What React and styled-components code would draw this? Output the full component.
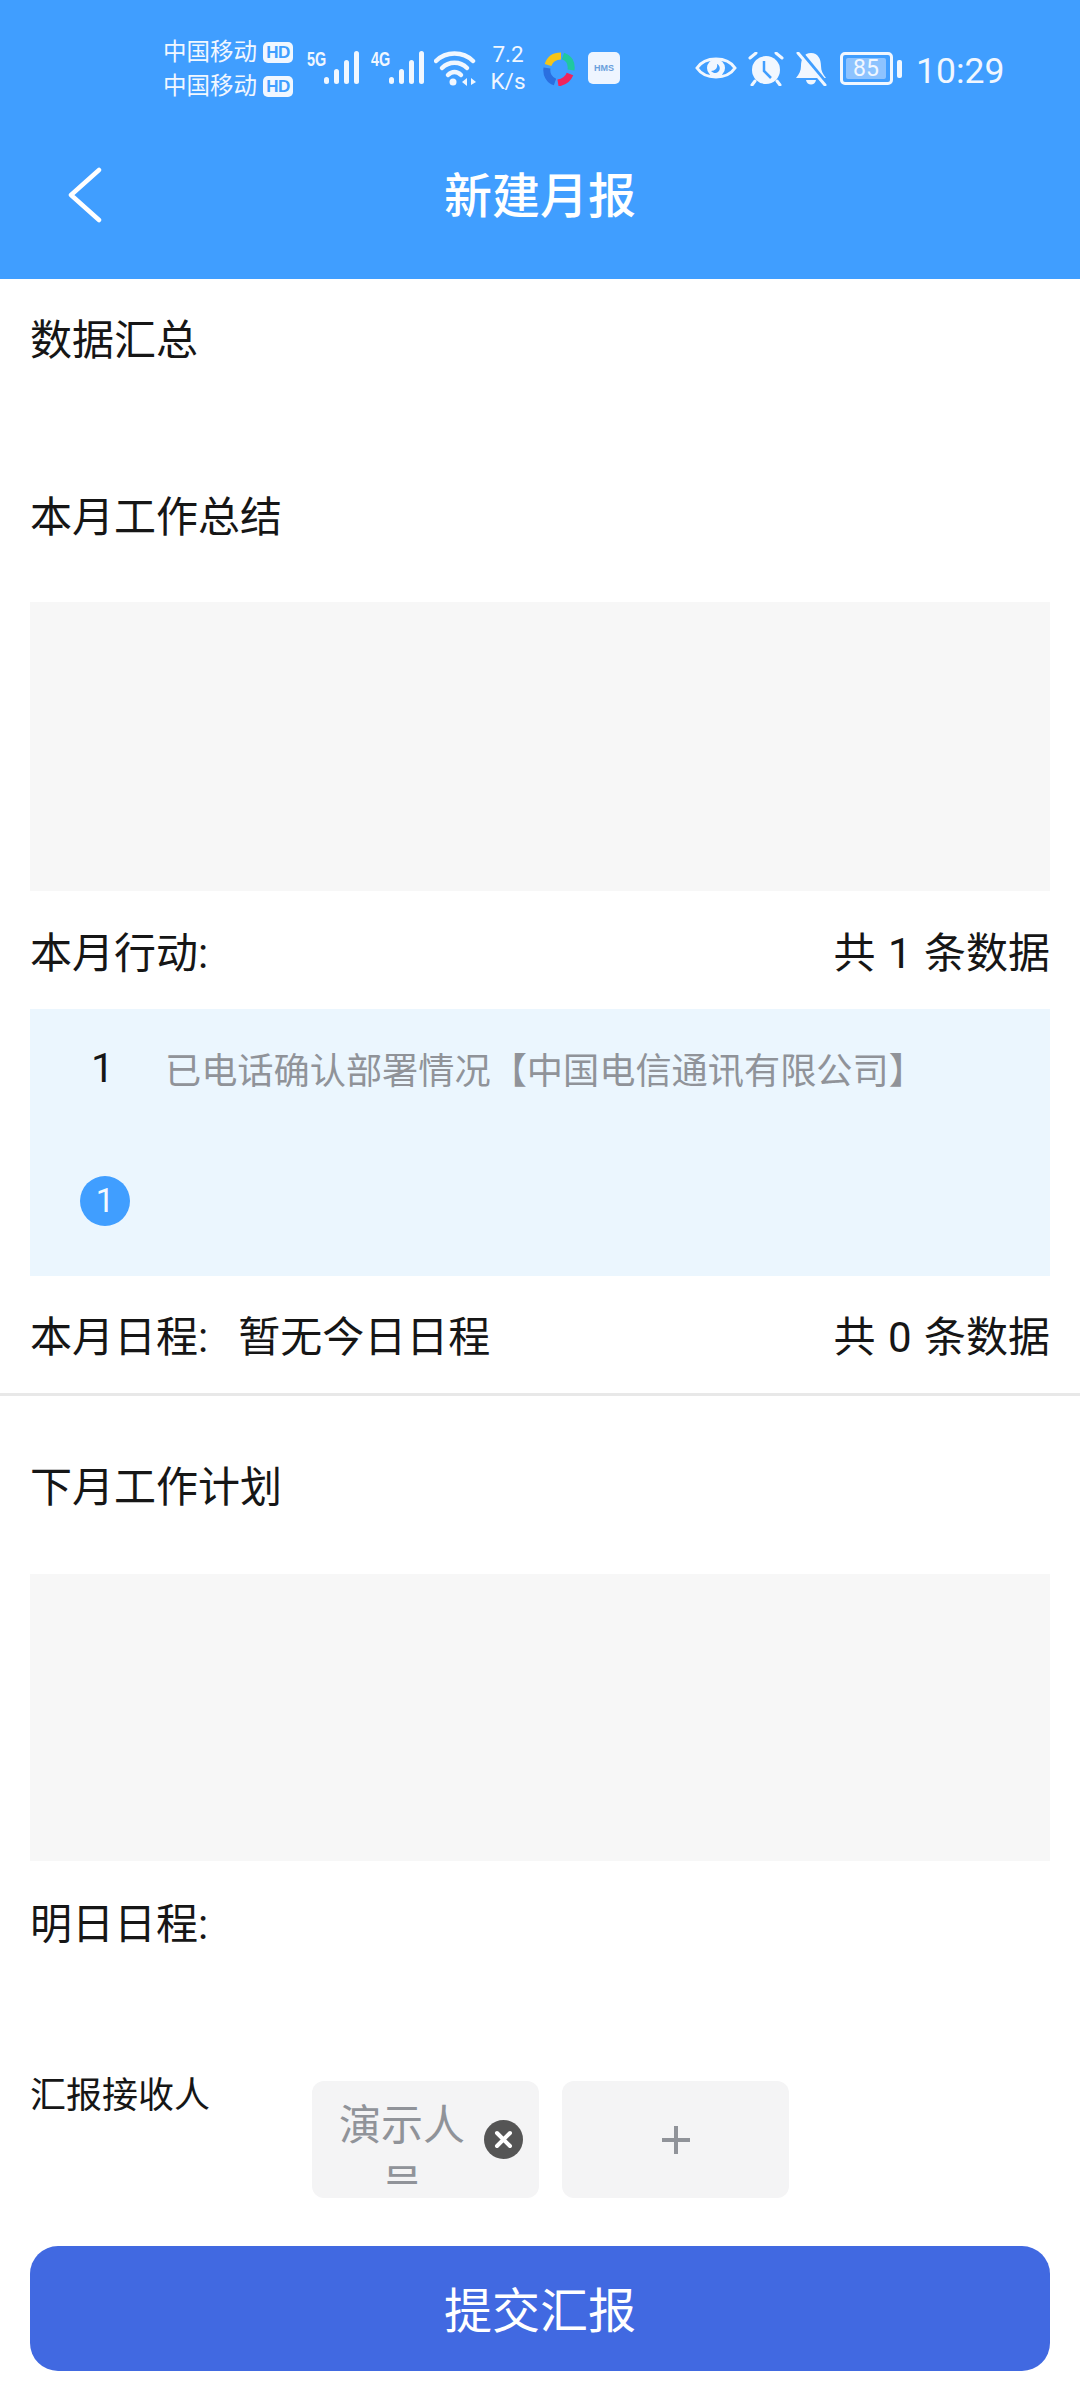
import styled, { createGlobalStyle } from 'styled-components';

const GlobalStyle = createGlobalStyle`
  html, body {
    margin: 0;
    padding: 0;
    background: #fff;
    font-family: Roboto, "Noto Sans CJK SC", sans-serif;
  }
`;

const Page = styled.div`
  width: 1080px;
  height: 2400px;
  overflow: hidden;
  background: #fff;
  color: #161616;
  display: flex;
  flex-direction: column;
`;

const Header = styled.header`
  background: #409eff;
  height: 279px;
  color: #fff;
  flex-shrink: 0;
`;

const StatusBar = styled.div`
  height: 100px;
  padding: 38px 0 0 163px;
  box-sizing: border-box;
  display: flex;
  align-items: flex-start;
  color: #f1f7ff;
`;

const Carriers = styled.div`
  display: flex;
  flex-direction: column;
  gap: 6px;
  width: 144px;
  flex-shrink: 0;
`;

const Carrier = styled.div`
  display: flex;
  align-items: center;
  gap: 6px;
  font-size: 23.5px;
  line-height: 28px;
  white-space: nowrap;
`;

const HdTag = styled.span`
  width: 30px;
  height: 21px;
  border-radius: 5px;
  background: #f1f7ff;
  color: #409eff;
  font: 700 17px/21px "Liberation Sans", sans-serif;
  text-align: center;
  letter-spacing: -0.5px;
`;

const SignalWrap = styled.div`
  position: relative;
  width: ${(p) => p.$w}px;
  height: 50px;
  margin-top: 12px;
  flex-shrink: 0;
`;

const NetLabel = styled.span`
  position: absolute;
  left: 0;
  top: 0;
  font: 700 20px/18px "Liberation Sans", sans-serif;
  transform: scaleX(0.72);
  transform-origin: left;
`;

const Bars = styled.svg`
  position: absolute;
  left: ${(p) => p.$x}px;
  top: 1px;
`;

const Speed = styled.div`
  width: 44px;
  margin-left: 10px;
  margin-top: 3px;
  text-align: center;
  font-size: 22.5px;
  line-height: 27px;
  flex-shrink: 0;
`;

const AppIcon = styled.svg`
  margin: 14px 13px 0 13px;
  flex-shrink: 0;
`;

const HmsIcon = styled.div`
  width: 32px;
  height: 32px;
  margin-top: 14px;
  border-radius: 5px;
  background: #eef5ff;
  color: #6a9fdc;
  font: 700 9px/32px "Liberation Sans", sans-serif;
  text-align: center;
  flex-shrink: 0;
`;

const StatusIcon = styled.svg`
  flex-shrink: 0;
  margin-top: ${(p) => p.$top}px;
  margin-left: ${(p) => p.$left}px;
`;

const Battery = styled.div`
  width: 53px;
  height: 33px;
  margin: 14px 0 0 13px;
  box-sizing: border-box;
  border: 3px solid #f1f7ff;
  border-radius: 5px;
  padding: 3px;
  flex-shrink: 0;
`;

const BatteryFill = styled.div`
  width: 40px;
  height: 21px;
  background: #8dc3ff;
  border-radius: 2px;
  font-size: 23px;
  line-height: 21px;
  text-align: center;
  color: #f1f7ff;
`;

const BatteryNub = styled.div`
  width: 5px;
  height: 18px;
  margin: 22px 0 0 4px;
  border-radius: 2px;
  background: #f1f7ff;
  flex-shrink: 0;
`;

const Clock = styled.div`
  margin: 11px 0 0 14px;
  font-size: 35.5px;
  line-height: 44px;
`;

const NavBar = styled.div`
  position: relative;
  height: 179px;
  box-sizing: border-box;
  padding-top: 14px;
  display: flex;
  align-items: center;
  justify-content: center;
`;

const BackIcon = styled.svg`
  position: absolute;
  left: 64px;
  top: 63px;
`;

const NavTitle = styled.h1`
  margin: 0;
  font-size: 48px;
  font-weight: 500;
  line-height: 64px;
`;

const Title = styled.div`
  padding: ${(p) => p.$pad};
  font-size: 42px;
  line-height: 60px;
`;

const TextArea = styled.div`
  margin: 0 30px;
  height: ${(p) => p.$h}px;
  background: #f7f7f7;
  flex-shrink: 0;
`;

const InfoRow = styled.div`
  display: flex;
  justify-content: space-between;
  align-items: center;
  height: ${(p) => p.$h}px;
  padding: 0 30px 2px;
  box-sizing: border-box;
  font-size: 42px;
  word-spacing: 2px;
  white-space: nowrap;
  flex-shrink: 0;
`;

const InfoLeft = styled.div`
  display: flex;
  gap: 30px;
`;

const ActionCard = styled.div`
  margin: 0 30px;
  height: 267px;
  background: #ebf6fe;
  flex-shrink: 0;
  box-sizing: border-box;
  padding-top: 34px;
`;

const ActionRow = styled.div`
  display: flex;
  align-items: center;
  height: 50px;
`;

const ActionIndex = styled.span`
  width: 135px;
  padding-left: 61px;
  box-sizing: border-box;
  font-size: 41px;
  flex-shrink: 0;
`;

const ActionText = styled.span`
  font-size: 36.2px;
  color: #909399;
  white-space: nowrap;
`;

const CountBadge = styled.div`
  width: 50px;
  height: 50px;
  margin: 83px 0 0 50px;
  border-radius: 50%;
  background: #409eff;
  color: #f4f9ff;
  font-size: 33px;
  line-height: 50px;
  text-align: center;
`;

const Divider = styled.div`
  height: 3px;
  background: #e8e8e8;
  flex-shrink: 0;
`;

const Recipients = styled.div`
  display: flex;
  padding-left: 30px;
  margin-top: 100px;
  height: 117px;
  flex-shrink: 0;
`;

const RecipientLabel = styled.div`
  width: 282px;
  flex-shrink: 0;
  font-size: 36px;
  line-height: 30px;
`;

const Chip = styled.div`
  width: 227px;
  height: 117px;
  margin-right: 23px;
  border-radius: 12px;
  background: #f4f4f5;
  color: #909399;
  box-sizing: border-box;
  padding-left: 26px;
  display: flex;
  align-items: center;
  gap: 18px;
  flex-shrink: 0;
`;

const ChipName = styled.div`
  width: 128px;
  height: 88px;
  overflow: hidden;
  font-size: 42px;
  line-height: 60px;
  text-align: center;
  flex-shrink: 0;
`;

const CloseIcon = styled.svg`
  flex-shrink: 0;
`;

const AddChip = styled(Chip)`
  padding-left: 0;
  justify-content: center;
`;

const SubmitButton = styled.button`
  display: block;
  width: 1020px;
  height: 125px;
  margin: 48px 30px 0;
  padding: 0 0 3px;
  border: 0;
  border-radius: 28px;
  background: #4169e1;
  color: #fff;
  font-family: inherit;
  font-size: 48px;
  flex-shrink: 0;
`;

const Signal = ({ label, w, x }) => (
  <SignalWrap $w={w}>
    <NetLabel>{label}</NetLabel>
    <Bars $x={x} width="36" height="34" viewBox="0 0 36 34" fill="#f1f7ff">
      <rect x="0" y="26" width="5" height="7" rx="2.5" />
      <rect x="10" y="18" width="5" height="15" rx="2.5" />
      <rect x="20" y="9" width="5" height="24" rx="2.5" />
      <rect x="30" y="0" width="5" height="33" rx="2.5" />
    </Bars>
  </SignalWrap>
);

const Wifi = () => (
  <StatusIcon $top={12} $left={0} width="42" height="36" viewBox="0 0 42 36" fill="none" stroke="#f1f7ff" strokeLinecap="round">
    <path d="M2 11 C12 1 29 1 39 11" strokeWidth="4.5" />
    <path d="M8 18 C15 11 26 11 33 18" strokeWidth="4.5" />
    <path d="M14 25 C18 21 23 21 27 25" strokeWidth="4.5" />
    <circle cx="19" cy="32" r="3.5" fill="#f1f7ff" stroke="none" />
    <path d="M28 32 l5 -4 v8 z M35 25 v11 M37 28 l5 4 l-5 3 z" fill="#f1f7ff" stroke="none" />
  </StatusIcon>
);

const Colorful = () => (
  <AppIcon width="32" height="34" viewBox="0 0 32 34" fill="none" strokeWidth="7">
    <path d="M5 13 C7 7 11 4 18 4" stroke="#f5c518" />
    <path d="M20 4 C26 6 29 11 28 18" stroke="#1fc8a0" />
    <path d="M27 22 C25 27 21 30 15 31" stroke="#f0245c" />
    <path d="M12 30 C6 28 3 22 4 16" stroke="#2a6fe0" />
  </AppIcon>
);

const Eye = () => (
  <StatusIcon $top={16} $left={75} width="42" height="28" viewBox="0 0 42 28">
    <path d="M2 14 C10 2 32 2 40 14 C32 26 10 26 2 14 Z" fill="none" stroke="#f1f7ff" strokeWidth="3" />
    <circle cx="21" cy="14" r="9" fill="#f1f7ff" />
    <path d="M16 17 C20 17 23 14 22 10 C25 11 26 16 23 18 C21 20 18 19 16 17 Z" fill="#409eff" />
  </StatusIcon>
);

const Alarm = () => (
  <StatusIcon $top={14} $left={11} width="36" height="34" viewBox="0 0 36 34">
    <circle cx="18" cy="18" r="14" fill="#f1f7ff" />
    <path d="M16 9 V19 L23 26" fill="none" stroke="#409eff" strokeWidth="2.5" />
    <path d="M2 6 L8 1 M34 6 L28 1 M7 29 L4 33 M29 29 L32 33" stroke="#f1f7ff" strokeWidth="3" strokeLinecap="round" />
  </StatusIcon>
);

const MutedBell = () => (
  <StatusIcon $top={14} $left={11} width="32" height="34" viewBox="0 0 32 34">
    <path d="M16 1 C23 1 26 7 26 14 C26 19 28 22 31 26 H1 C4 22 6 19 6 14 C6 7 9 1 16 1 Z" fill="#f1f7ff" />
    <path d="M11 28 H21 C20 34 12 34 11 28 Z" fill="#f1f7ff" />
    <path d="M5 -1 L33 33" stroke="#409eff" strokeWidth="3.5" />
    <path d="M3 1 L30 33" stroke="#f1f7ff" strokeWidth="3" strokeLinecap="round" />
  </StatusIcon>
);

const App = () => {
  return (
    <>
      <GlobalStyle />
      <Page>
        <Header>
          <StatusBar>
            <Carriers>
              <Carrier>中国移动<HdTag>HD</HdTag></Carrier>
              <Carrier>中国移动<HdTag>HD</HdTag></Carrier>
            </Carriers>
            <Signal label="5G" w={64} x={17} />
            <Signal label="4G" w={63} x={18} />
            <Wifi />
            <Speed>7.2<br />K/s</Speed>
            <Colorful />
            <HmsIcon>HMS</HmsIcon>
            <Eye />
            <Alarm />
            <MutedBell />
            <Battery><BatteryFill>85</BatteryFill></Battery>
            <BatteryNub />
            <Clock>10:29</Clock>
          </StatusBar>
          <NavBar>
            <BackIcon width="40" height="60" viewBox="0 0 40 60" fill="none" stroke="#fff" strokeWidth="4.5" strokeLinecap="round" strokeLinejoin="round">
              <path d="M35 7 L7 32 L35 57" />
            </BackIcon>
            <NavTitle>新建月报</NavTitle>
          </NavBar>
        </Header>

        <Title $pad="32px 30px 30px">数据汇总</Title>
        <Title $pad="87px 30px 54px">本月工作总结</Title>
        <TextArea $h={289} />
        <InfoRow $h={118}>
          <span>本月行动:</span>
          <span>共 1 条数据</span>
        </InfoRow>
        <ActionCard>
          <ActionRow>
            <ActionIndex>1</ActionIndex>
            <ActionText>已电话确认部署情况【中国电信通讯有限公司】</ActionText>
          </ActionRow>
          <CountBadge>1</CountBadge>
        </ActionCard>
        <InfoRow $h={117}>
          <InfoLeft>
            <span>本月日程:</span>
            <span>暂无今日日程</span>
          </InfoLeft>
          <span>共 0 条数据</span>
        </InfoRow>
        <Divider />
        <Title $pad="62px 30px 56px">下月工作计划</Title>
        <TextArea $h={287} />
        <InfoRow $h={120}>
          <span>明日日程:</span>
        </InfoRow>
        <Recipients>
          <RecipientLabel>汇报接收人</RecipientLabel>
          <Chip>
            <ChipName>演示人员</ChipName>
            <CloseIcon width="39" height="39" viewBox="0 0 39 39">
              <circle cx="19.5" cy="19.5" r="19.5" fill="#555" />
              <path d="M13 13 L26 26 M26 13 L13 26" stroke="#fff" strokeWidth="4" strokeLinecap="round" />
            </CloseIcon>
          </Chip>
          <AddChip>
            <svg width="30" height="30" viewBox="0 0 30 30">
              <path d="M15 1 V29 M1 15 H29" stroke="#909399" strokeWidth="4" />
            </svg>
          </AddChip>
        </Recipients>
        <SubmitButton>提交汇报</SubmitButton>
      </Page>
    </>
  );
};

export default App;
